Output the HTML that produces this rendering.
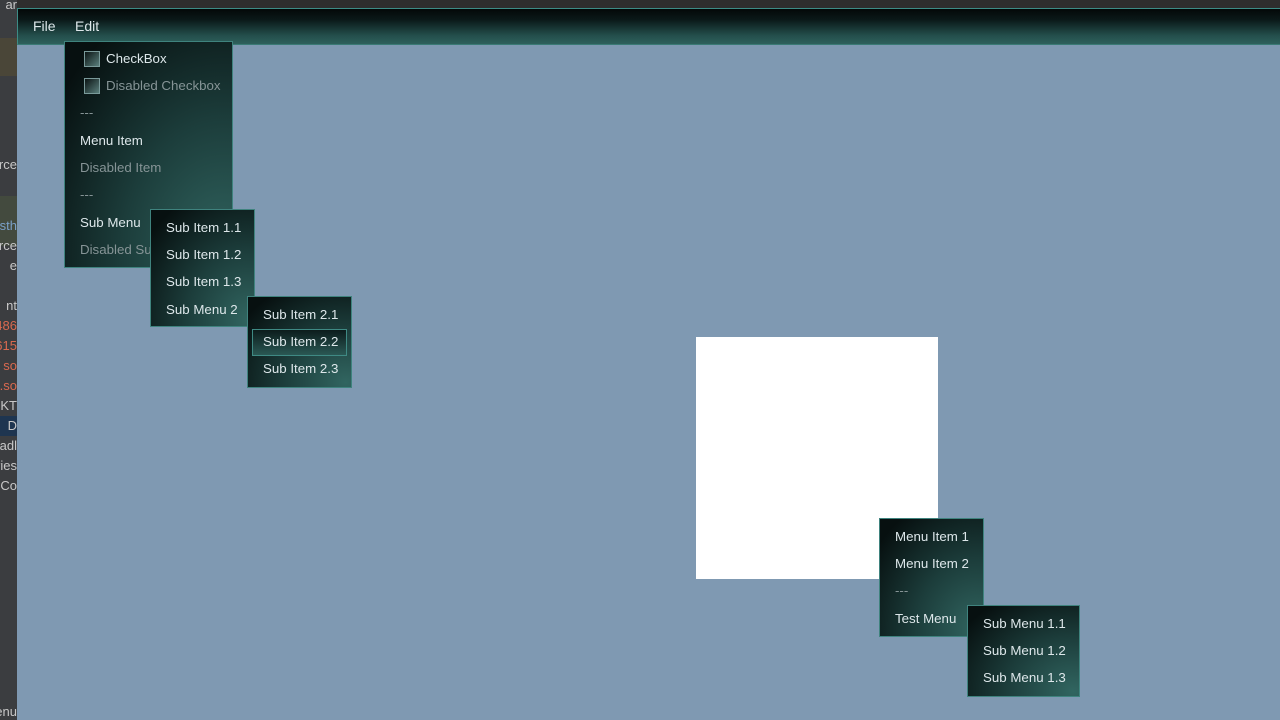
<!DOCTYPE html>
<html><head><style>
*{margin:0;padding:0;box-sizing:border-box}
body{width:1280px;height:720px;overflow:hidden;background:#7f99b2;position:relative;font-family:"Liberation Sans",sans-serif;font-size:13.3px;color:#dde7ea}
.abs{position:absolute}
.side{left:0;top:0;width:17px;height:720px;background:#3b3d40;overflow:hidden;font-size:13px;color:#c8c8c8;white-space:nowrap}
.side div{position:absolute;right:0}
.title{left:17px;top:0;width:1263px;height:9px;background:#2e2e2e}
.bar{left:17px;top:8px;width:1263px;height:37px;border-top:1px solid #3c8c86;border-bottom:1px solid #3a7a75;border-left:1px solid #3c8c86;background:linear-gradient(#030808 0%,#0a1818 30%,#234e4b 75%,#2e605c 100%)}
.bar span{position:absolute;top:9px;font-size:14px}
.m{position:absolute;border:1px solid #3f837e;background:radial-gradient(ellipse at 95% 95%,#316560 0%,#1c3d3b 45%,#071010 90%);}
.m div{position:absolute;white-space:nowrap;line-height:18px}
.d{color:#869496}
.cb{position:absolute;width:16px;height:16px;border:1px solid #7a9a9a;background:linear-gradient(135deg,#0b1414,#5a7f7c)}
</style></head><body>
<div class="abs side">
<div style="top:-3px">ar</div>
<div style="top:38px;height:20px;width:17px;background:#4a4638"></div>
<div style="top:56px;height:20px;width:17px;background:#4a4638"></div>
<div style="top:157px">urce</div>
<div style="top:196px;height:50px;width:17px;background:#434a3e"></div>
<div style="top:218px;color:#7aa0c8">esth</div>
<div style="top:238px">urce</div>
<div style="top:258px">e</div>
<div style="top:298px">nt</div>
<div style="top:318px;color:#d9694f">486</div>
<div style="top:338px;color:#d9694f">615</div>
<div style="top:358px;color:#d9694f">so</div>
<div style="top:378px;color:#d9694f">4.so</div>
<div style="top:398px">KT</div>
<div style="top:416px;height:20px;width:17px;background:#1e3550"></div>
<div style="top:418px">D</div>
<div style="top:438px">adl</div>
<div style="top:458px">ries</div>
<div style="top:478px">Co</div>
<div style="top:704px">enu</div>
</div>
<div class="abs title"></div>
<div class="abs bar"><span style="left:15px">File</span><span style="left:57px">Edit</span></div>

<div class="m" style="left:64px;top:41px;width:169px;height:227px">
<div class="cb" style="left:19px;top:9px"></div><div style="left:41px;top:8px">CheckBox</div>
<div class="cb" style="left:19px;top:36px"></div><div class="d" style="left:41px;top:35px">Disabled Checkbox</div>
<div class="d" style="left:15px;top:62px">---</div>
<div style="left:15px;top:90px">Menu Item</div>
<div class="d" style="left:15px;top:117px">Disabled Item</div>
<div class="d" style="left:15px;top:144px">---</div>
<div style="left:15px;top:172px">Sub Menu</div>
<div class="d" style="left:15px;top:199px">Disabled Sub</div>
</div>
<div class="m" style="left:150px;top:209px;width:105px;height:118px">
<div style="left:15px;top:9px">Sub Item 1.1</div>
<div style="left:15px;top:36px">Sub Item 1.2</div>
<div style="left:15px;top:63px">Sub Item 1.3</div>
<div style="left:15px;top:91px">Sub Menu 2</div>
</div>
<div class="m" style="left:247px;top:296px;width:105px;height:92px">
<div style="left:15px;top:9px">Sub Item 2.1</div>
<div style="left:4px;top:32px;width:95px;height:27px;border:1px solid #3f8a84;background:linear-gradient(#0c1c1c,#2a5854)"></div>
<div style="left:15px;top:36px">Sub Item 2.2</div>
<div style="left:15px;top:63px">Sub Item 2.3</div>
</div>

<div class="abs" style="left:696px;top:337px;width:242px;height:242px;background:#fff"></div>

<div class="m" style="left:879px;top:518px;width:105px;height:119px">
<div style="left:15px;top:9px">Menu Item 1</div>
<div style="left:15px;top:36px">Menu Item 2</div>
<div class="d" style="left:15px;top:63px">---</div>
<div style="left:15px;top:91px">Test Menu</div>
</div>
<div class="m" style="left:967px;top:605px;width:113px;height:92px">
<div style="left:15px;top:9px">Sub Menu 1.1</div>
<div style="left:15px;top:36px">Sub Menu 1.2</div>
<div style="left:15px;top:63px">Sub Menu 1.3</div>
</div>
</body></html>
